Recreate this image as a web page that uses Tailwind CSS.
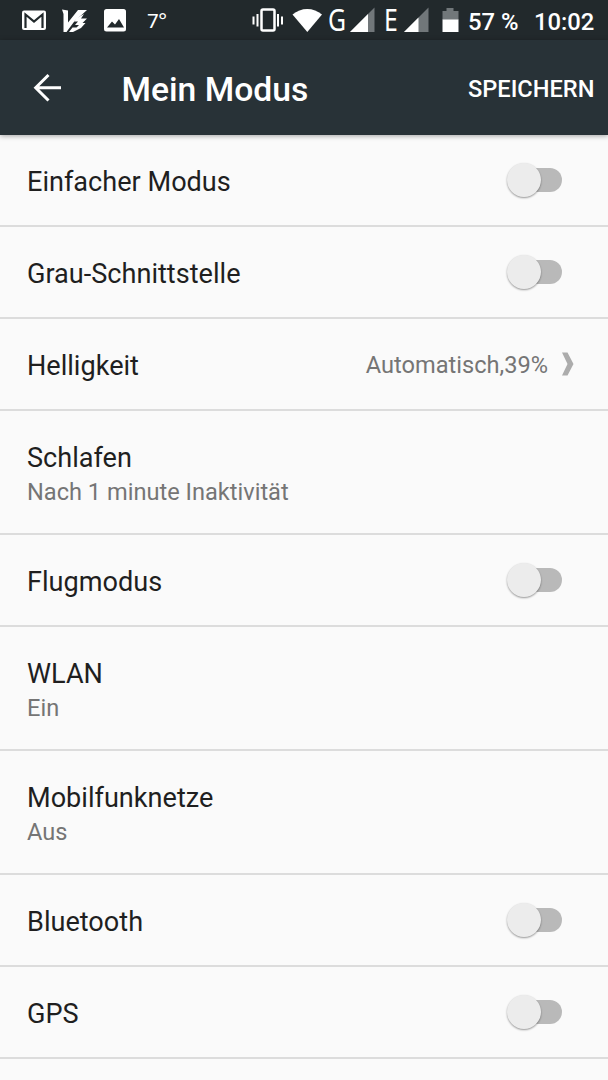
<!DOCTYPE html>
<html lang="de">
<head>
<meta charset="utf-8">
<title>Mein Modus</title>
<script src="https://cdn.jsdelivr.net/npm/@tailwindcss/browser@4"></script>
</head>
<body class="w-[608px] h-[1080px] overflow-hidden bg-[#fafafa] font-['Roboto',sans-serif] text-[#1f1f1f]">
<div class="flex h-10 bg-[#22292c] text-white">
  <svg class="block h-10 w-[140px] shrink-0" viewBox="0 0 140 40">
    <rect x="22" y="10.5" width="24" height="19.5" rx="2" fill="#fff"/>
    <path d="M25.5 28V14.5L34 21.5L42.500 14.500V28" fill="none" stroke="#22292c" stroke-width="2.2"/>
    <path d="M62 9.500l6 1v12L78 10h9l-6 5.500-6 5-8.500 11.500H63.500V14z" fill="#fff"/>
    <path d="M77 18l7-4-3 4.500h6L82.500 23h3L81 28l-8 4h-4l3.500-4.500h4L79 25h-4l3-3.500h-4z" fill="#fff"/>
    <rect x="104" y="9" width="22" height="22.500" rx="2.500" fill="#fff"/>
    <path d="M107 27.500l5-6 3 3 4-5.500 5 8.500z" fill="#22292c"/>
  </svg>
  <div class="ml-[7px] mt-[7px] w-[105px] shrink-0 font-['Noto_Sans'] text-[20.500px] leading-[27px] tracking-[-.5px]">7°</div>
  <svg class="block h-10 w-[75px] shrink-0" viewBox="252 0 75 40">
    <g fill="none" stroke="#fff">
      <rect x="261.500" y="9.500" width="13" height="21" rx="1.500" stroke-width="2.500"/>
      <path d="M253.500 16.500v8M257.500 14v12.500M278 14v12.500M282 16.500v8" stroke-width="2"/>
    </g>
    <path d="M292.500 14.500C301 7 313.500 7 322 14.500L307.300 32z" fill="#fff"/>
  </svg>
  <div class="mt-[2px] w-[23px] shrink-0 origin-left translate-x-px scale-x-[.8] whitespace-nowrap font-['Noto_Sans'] text-[31px] leading-[34px]">G</div>
  <svg class="block h-10 w-[33px] shrink-0" viewBox="350 0 33 40">
    <path d="M350 32L374.500 7.500V32z" fill="#71777a"/><path d="M350 32L368 14V32z" fill="#fff"/>
  </svg>
  <div class="mt-[2px] w-[21px] shrink-0 origin-left translate-x-px scale-x-[.8] whitespace-nowrap font-['Noto_Sans'] text-[31px] leading-[34px]">E</div>
  <svg class="block h-10 w-[64px] shrink-0" viewBox="404 0 64 40">
    <path d="M404 32L428.500 7.500V32z" fill="#71777a"/><path d="M404 32L418.500 17.500V32z" fill="#fff"/>
    <path d="M442.500 11h4V8h7v3h5v9h-16z" fill="#71777a"/><path d="M442.500 19.500h16V32h-16z" fill="#fff"/>
  </svg>
  <div class="mt-[8px] w-[66px] shrink-0 whitespace-nowrap text-[23.800px] leading-[28px] font-medium">57 %</div>
  <div class="mt-[8px] whitespace-nowrap text-[23.800px] leading-[28px] font-medium">10:02</div>
</div>
<header class="relative flex h-[95px] items-center bg-[#283237] text-white shadow-[0_1px_5px_rgba(0,0,0,.35)]">
  <svg class="block h-10 w-[121.500px] shrink-0" viewBox="0 68 121.500 40">
    <path d="M61 87.800H36M48.500 75L35.700 87.800L48.500 100.500" fill="none" stroke="#fff" stroke-width="3"/>
  </svg>
  <h1 class="mt-[5px] w-[346.500px] whitespace-nowrap text-[33.700px] leading-10 font-medium">Mein Modus</h1>
  <button class="mt-[2px] whitespace-nowrap text-[23.600px] leading-7 font-medium">SPEICHERN</button>
</header>
<main id="list"></main>
<script>
const rows = [
  ['Einfacher Modus', 'switch'],
  ['Grau-Schnittstelle', 'switch'],
  ['Helligkeit', 'value', 'Automatisch,39%'],
  ['Schlafen', 'sub', 'Nach 1 minute Inaktivität'],
  ['Flugmodus', 'switch'],
  ['WLAN', 'sub', 'Ein'],
  ['Mobilfunknetze', 'sub', 'Aus'],
  ['Bluetooth', 'switch'],
  ['GPS', 'switch']
];
const toggle = `<span class="mr-[46px] flex h-6 w-[55px] items-center rounded-full bg-gradient-to-r from-transparent from-40% to-[#b9b9b9] to-40%"><span class="block size-[34px] shrink-0 rounded-full bg-[#ececec] shadow-[0_1px_2px_rgba(0,0,0,.4)]"></span></span>`;
const chevron = `<svg class="mr-[34px] ml-[13px] block h-6 w-[13px]" viewBox="0 0 13 24"><path d="M1 .500h5.500L12.500 12L6.500 23.500H1L6.500 12z" fill="#acacac"/></svg>`;
document.getElementById('list').innerHTML = rows.map(([t, k, v]) => k === 'sub'
  ? `<div class="h-[124px] border-b-2 border-[#dcdcdc] pt-[31px] pl-[27px]"><div class="text-[27.100px] leading-8">${t}</div><div class="mt-px text-[23.600px] leading-[34px] text-[#757575]">${v}</div></div>`
  : `<div class="flex h-[92px] items-center justify-between border-b-2 border-[#dcdcdc] pl-[27px]"><div class="mt-[4px] text-[27.100px] leading-8">${t}</div>${k === 'switch' ? toggle : `<div class="flex items-center text-[23.600px] leading-8 text-[#757575]"><span class="mt-[2px]">${v}</span>${chevron}</div>`}</div>`
).join('');
</script>
</body>
</html>
